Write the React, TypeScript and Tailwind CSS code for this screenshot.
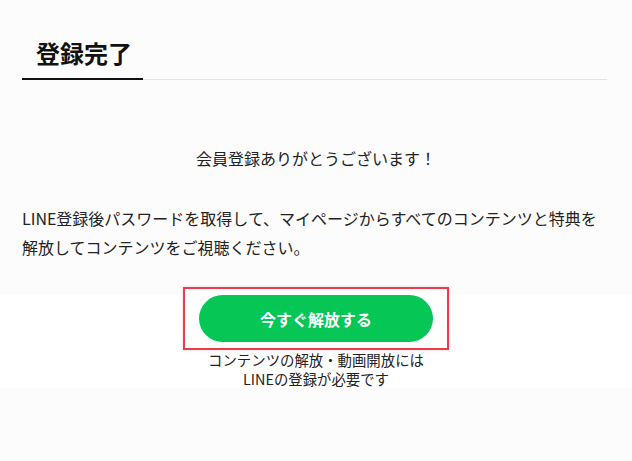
export default function App() {
  const font = { fontFamily: '"Noto Sans CJK JP", "Noto Sans", sans-serif' };
  return (
    <div className="min-h-[461px] w-full bg-[#fcfcfc] text-[#222]" style={font}>
      <div className="pt-[36px] pl-[22px] pr-[25px]">
        <div className="flex border-b border-[#e3e3e3]">
          <h1 className="-mb-px border-b-2 border-[#111] pl-[14px] pr-[11px] pb-[8px] text-[24px] font-bold leading-[34px] text-[#111]">
            登録完了
          </h1>
        </div>
      </div>
      <p className="mt-[64px] text-center text-[16px] leading-[29px]">会員登録ありがとうございます！</p>
      <p className="mt-[31px] px-[22px] text-[16px] leading-[29px]">
        LINE登録後パスワードを取得して、マイページからすべてのコンテンツと特典を解放してコンテンツをご視聴ください。
      </p>
      <div className="mt-[33px] flex flex-col items-center bg-white">
        <div className="-mt-[8px] border-2 border-[#f03a4c] bg-white px-[14px] py-[6px] shadow-[0_0_4px_rgba(0,0,0,0.12)]">
          <button className="flex h-[47px] w-[234px] items-center justify-center rounded-full bg-[#06c755] text-[16px] font-bold text-white">
            今すぐ解放する
          </button>
        </div>
        <p className="text-center text-[14.4px] leading-[19px] text-[#222]">
          コンテンツの解放・動画開放には
          <br />
          LINEの登録が必要です
        </p>
      </div>
    </div>
  );
}
